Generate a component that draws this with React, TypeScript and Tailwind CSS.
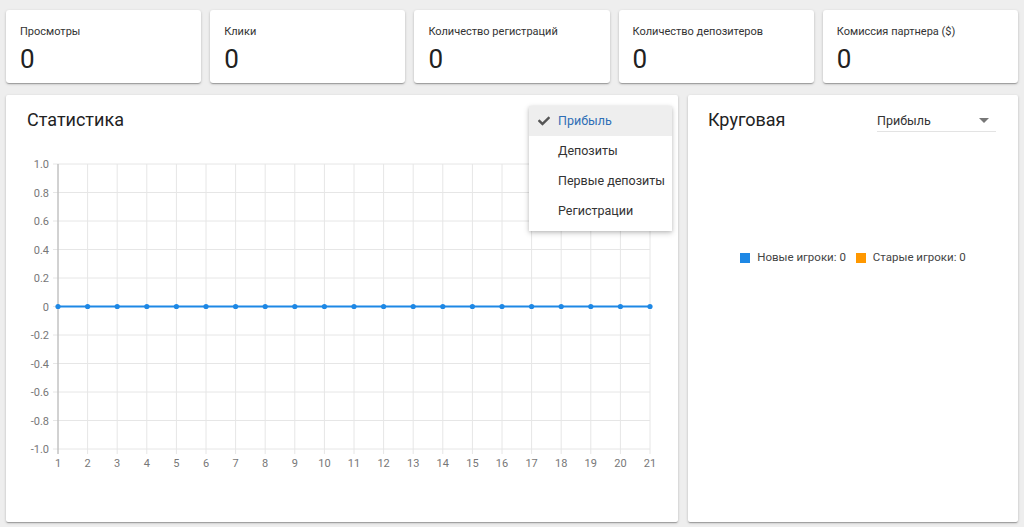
import { FaCheck } from "react-icons/fa";

const stats = [
  "Просмотры",
  "Клики",
  "Количество регистраций",
  "Количество депозитеров",
  "Комиссия партнера ($)",
];

const menuItems = ["Прибыль", "Депозиты", "Первые депозиты", "Регистрации"];

const shadow =
  "shadow-[0_1px_3px_rgba(0,0,0,0.2),0_1px_1px_rgba(0,0,0,0.14),0_2px_1px_-1px_rgba(0,0,0,0.12)]";

// chart geometry (svg coords)
const X0 = 52;
const X1 = 644;
const Y0 = 29;
const Y1 = 314;
const yTicks = [1, 0.8, 0.6, 0.4, 0.2, 0, -0.2, -0.4, -0.6, -0.8, -1];
const xTicks = Array.from({ length: 21 }, (_, i) => i + 1);
const xAt = (i: number) => X0 + ((i - 1) * (X1 - X0)) / 20;
const yAt = (v: number) => Y0 + ((1 - v) / 2) * (Y1 - Y0);

function LineChart() {
  const y0 = yAt(0);
  return (
    <svg width={672} height={345} className="block">
      {yTicks.map((v) => (
        <g key={v}>
          <line x1={X0 - 5} x2={X1} y1={yAt(v)} y2={yAt(v)} stroke="#e6e6e6" strokeWidth={1} />
          <text
            x={X0 - 9}
            y={yAt(v) + 4}
            textAnchor="end"
            fontSize={11}
            fill="#777"
            fontFamily="Roboto, Arial, sans-serif"
          >
            {v === 0 ? "0" : v.toFixed(1)}
          </text>
        </g>
      ))}
      {xTicks.map((n) => (
        <g key={n}>
          <line x1={xAt(n)} x2={xAt(n)} y1={Y0} y2={Y1 + 5} stroke="#e6e6e6" strokeWidth={1} />
          <text
            x={xAt(n)}
            y={Y1 + 18}
            textAnchor="middle"
            fontSize={11}
            fill="#777"
            fontFamily="Roboto, Arial, sans-serif"
          >
            {n}
          </text>
        </g>
      ))}
      <line x1={X0} x2={X0} y1={Y0} y2={Y1 + 5} stroke="#b0b0b0" strokeWidth={1} />
      <line x1={X0} x2={X1} y1={y0} y2={y0} stroke="#1e88e5" strokeWidth={2} />
      {xTicks.map((n) => (
        <circle key={n} cx={xAt(n)} cy={y0} r={2.6} fill="#1e88e5" />
      ))}
    </svg>
  );
}

export default function App() {
  return (
    <div
      className="min-h-[527px] w-[1024px] bg-[#eeeeee] px-[6px] pt-[10px] text-[#212121]"
      style={{ fontFamily: "Roboto, 'Liberation Sans', Arial, sans-serif" }}
    >
      <div className="grid grid-cols-5 gap-[9px]">
        {stats.map((label) => (
          <div key={label} className={`h-[73px] rounded-[3px] bg-white pl-[14px] pt-[14px] ${shadow}`}>
            <div className="text-[11px] leading-4 text-[#333]">{label}</div>
            <div className="mt-[3px] text-[26px] leading-8 text-[#212121]">0</div>
          </div>
        ))}
      </div>

      <div className="mt-[12px] flex gap-[10px]">
        <div className={`relative h-[427px] w-[672px] rounded-[2px] bg-white ${shadow}`}>
          <div className="h-10 pl-[21px] pt-[13px] text-[18px] leading-6 text-[#222]">Статистика</div>
          <LineChart />

          <div className="absolute right-[6px] top-[11px] w-[143px] bg-white pb-[5px] shadow-[0_2px_6px_rgba(0,0,0,0.2),0_1px_3px_rgba(0,0,0,0.12)]">
            {menuItems.map((item, i) => (
              <div
                key={item}
                className={`flex h-[30px] items-center text-[12.5px] ${
                  i === 0 ? "bg-[#eeeeee] text-[#2f6fb6]" : "text-[#333]"
                }`}
              >
                <span className="flex w-[29px] justify-end pr-[8px] text-[#555]">
                  {i === 0 && <FaCheck size={12} />}
                </span>
                {item}
              </div>
            ))}
          </div>
        </div>

        <div className={`h-[427px] w-[330px] rounded-[2px] bg-white ${shadow}`}>
          <div className="flex h-10 items-start justify-between pr-[22px]">
            <div className="pl-[20px] pt-[13px] text-[18px] leading-6 text-[#222]">Круговая</div>
            <div className="mt-[16px] flex h-[21px] w-[119px] items-start justify-between border-b border-[#e3e3e3] pt-[2px] text-[12.5px] leading-4 text-[#333]">
              <span>Прибыль</span>
              <svg width="10" height="5" viewBox="0 0 10 5" className="mr-[7px] mt-[5px]">
                <path d="M0 0h10L5 5z" fill="#777" />
              </svg>
            </div>
          </div>
          <div className="mt-[115px] flex h-4 items-center justify-center text-[11.5px] text-[#444]">
            <span className="mr-[7px] h-[10px] w-[10px] bg-[#1e88e5]" />
            <span>Новые игроки: 0</span>
            <span className="ml-[10px] mr-[7px] h-[10px] w-[10px] bg-[#ff9800]" />
            <span>Старые игроки: 0</span>
          </div>
        </div>
      </div>
    </div>
  );
}
